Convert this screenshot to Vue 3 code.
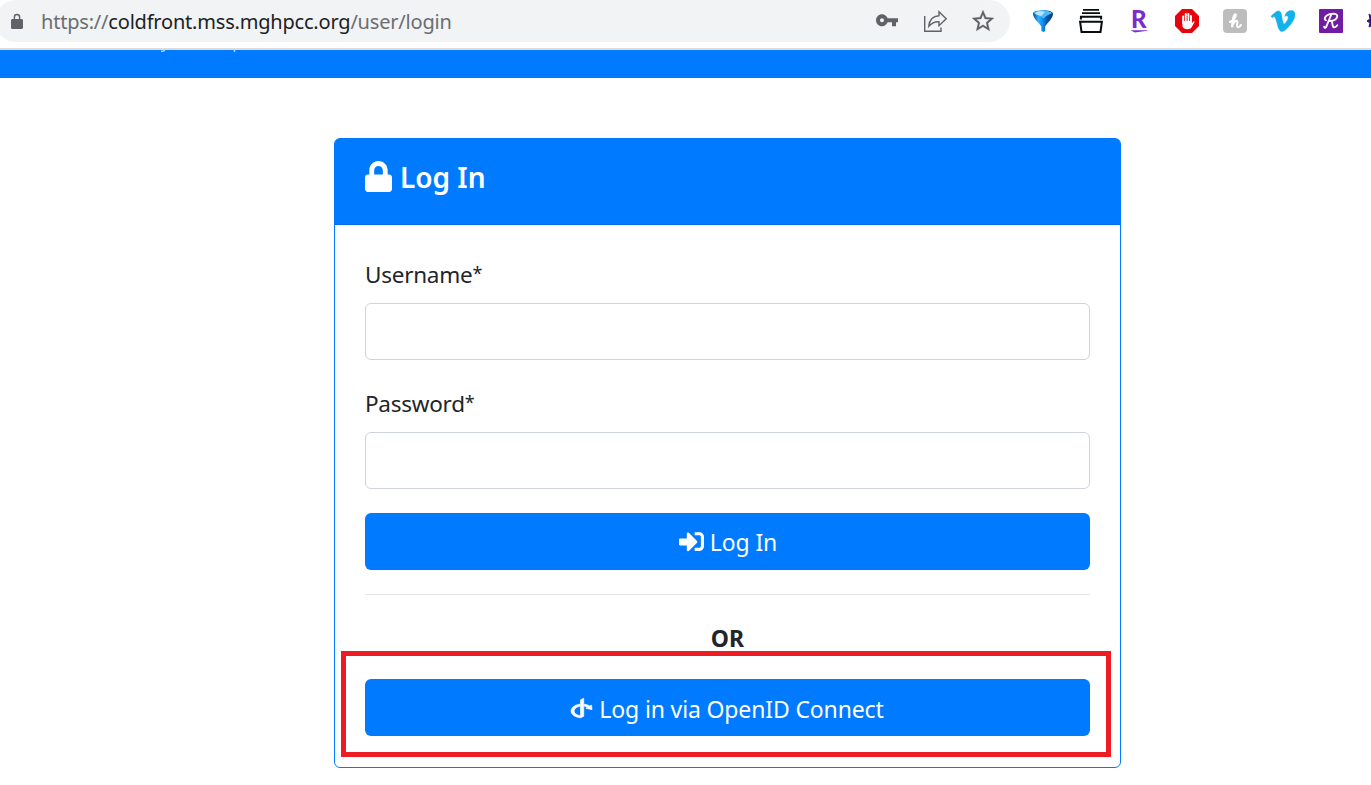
<script setup>
import { ref } from 'vue'

const username = ref('')
const password = ref('')
</script>

<template>
  <div class="page">
    <header class="toolbar">
      <div class="omnibox">
        <svg class="site-lock" viewBox="0 0 12 16"><path d="M1.6 6H2.7V4.1a3.3 3.3 0 0 1 6.6 0V6h1.1C11.4 6 12 6.6 12 7.5v7c0 .9-.6 1.5-1.6 1.5H1.6C.6 16 0 15.400 0 14.500v-7C0 6.600.6 6 1.600 6zm2.500 0h3.800V4.200a1.900 1.900 0 0 0-3.800 0z" /></svg>
        <div class="url">https://<span class="host">coldfront.mss.mghpcc.org</span>/user/login</div>
        <div class="page-actions">
          <svg viewBox="0 0 24 24"><path transform="translate(0 -.7)" fill="#5f6368" d="M12.65 10C11.83 7.670 9.610 6 7 6c-3.310 0-6 2.690-6 6s2.690 6 6 6c2.610 0 4.830-1.670 5.650-4H17v4h4v-4h2v-4H12.650zM7 14c-1.100 0-2-.9-2-2s.9-2 2-2 2 .9 2 2-.9 2-2 2z" /></svg>
          <svg viewBox="0 0 24 24" fill="none" stroke="#5f6368" stroke-width="1.4"><path d="M1.700 7V22.200H18V18.500" /><path d="M16 2.800L23.200 9.800L16 16.700V12.800C11.500 12.500 8.500 14.200 5.800 17.300C6.300 11 9.500 7.100 16 6.700Z" /></svg>
          <svg viewBox="0 0 24 24"><path transform="translate(-1.200 -1.200) scale(1.100)" fill="#5f6368" stroke="#5f6368" stroke-width=".2" d="M22 9.240l-7.190-.62L12 2 9.190 8.630 2 9.240l5.460 4.730L5.820 21 12 17.270 18.180 21l-1.630-7.030L22 9.240zM12 15.400l-3.760 2.270 1-4.280-3.320-2.880 4.380-.38L12 6.100l1.710 4.040 4.380.38-3.320 2.880 1 4.280L12 15.400z" /></svg>
        </div>
      </div>
      <div class="extensions">
        <svg viewBox="0 0 24 24">
          <defs>
            <linearGradient id="funnel" x1="0" x2="1"><stop offset="0" stop-color="#064c9b" /><stop offset=".28" stop-color="#35b2ff" /><stop offset=".5" stop-color="#0b8bea" /><stop offset=".7" stop-color="#0757a8" /><stop offset="1" stop-color="#063a7c" /></linearGradient>
          </defs>
          <path fill="url(#funnel)" d="M2 4.500C2 0 22 0 22 4.500C22 10 16 14 14.200 17.500V22L12.500 23L10.300 22V17.500C8.500 14 2 10 2 4.500Z" />
          <path d="M3 4.200C4 1.200 19 1 21 4.200C18.500 5.500 14.500 6.500 12.500 9.500C10 6.500 5.500 6.500 3 4.200Z" fill="#4fb9f7" />
          <path d="M4 4C6 2 12 1.500 14 3C12 4.500 11 6 10.500 7C8 6 5.500 6 4 4Z" fill="#c5edff" opacity=".85" />
        </svg>
        <svg viewBox="0 0 24 24" fill="none" stroke="#080c0e" stroke-width="2"><path d="M4 .8H20M3 4.200H21" stroke-width="1.700" /><path d="M1.900 10.500V7.700H22.100V10.500" /><path d="M1.100 12.700H22.900L21.500 22.900H2.500Z" /></svg>
        <svg viewBox="0 0 24 24"><text x="4" y="19" class="bold-mark">R</text><path d="M3.500 21.200H22C18 22.300 12 22.500 8 23.500Z" fill="#7d2bd0" /></svg>
        <svg viewBox="0 0 24 24">
          <path d="M7 0H17L24 7V17L17 24H7L0 17V7Z" fill="#e6050c" />
          <path d="M8.200 7.500V14M10.800 5V13M13.400 5V13M16 7V14" stroke="#fff" stroke-width="2" stroke-linecap="round" /><path d="M7.200 12H17V14L18.400 12.500C19.300 11.900 20 12.500 19.300 13.500L16.500 18.500C15.500 20.700 8.500 21 7.500 17.500Z" fill="#fff" />
          <path d="M9.500 8V12M12.100 7V12M14.700 8V12" stroke="#e6050c" stroke-width=".4" />
        </svg>
        <svg viewBox="0 0 24 24"><rect width="24" height="24" rx="4" fill="#bdbdbd" /><path d="M7 13C11 11 13.500 7.500 12.700 5.600C11.300 4.500 9.800 8.500 9 18.300C10 13.500 12 11.300 13.800 12C15.500 12.700 12.800 17.600 14.800 18.100C16.300 18.500 17.300 17.400 17.800 16" fill="none" stroke="#fff" stroke-width="2.100" stroke-linecap="round" /></svg>
        <svg viewBox="0 0 24 24"><path fill="#12b1ea" stroke="#12b1ea" stroke-width=".5" d="M23.980 6.480c-.1 2.340-1.730 5.540-4.890 9.600-3.260 4.240-6.020 6.370-8.290 6.370-1.400 0-2.590-1.300-3.560-3.890L5.300 11.440C4.580 8.850 3.810 7.560 2.980 7.560c-.18 0-.81.380-1.890 1.130L0 7.240c1.190-1.040 2.360-2.090 3.510-3.130 1.580-1.370 2.770-2.090 3.560-2.160 1.870-.18 3.020 1.100 3.450 3.830.47 2.950.79 4.780.97 5.500.54 2.450 1.130 3.670 1.780 3.670.5 0 1.260-.8 2.270-2.390 1.010-1.600 1.550-2.810 1.620-3.640.14-1.380-.4-2.070-1.620-2.070-.58 0-1.170.13-1.780.4 1.180-3.870 3.440-5.750 6.770-5.640 2.470.07 3.640 1.680 3.450 4.870z" /></svg>
        <svg viewBox="0 0 24 24"><rect width="24" height="24" rx="1" fill="#721ba3" /><path d="M12 6C11 9 8.500 14.500 7 18.300C6.500 19 5.400 18.900 5.200 17.800M7 11.300C4.500 10.500 6 6.500 10 5.300C14 4.300 19 4.300 18.200 7.800C17.500 10.700 13.500 11.900 11 12M12.300 12C14 12.500 12.700 17.800 15 18.300C16.500 18.600 17.300 17.300 18.200 16.300" fill="none" stroke="#fff" stroke-width="1.900" stroke-linecap="round" /></svg>
        <svg viewBox="0 0 24 24"><path d="M2 5L6 8V16L2 18L3 14L0 12L3 10Z" fill="#35137d" stroke="#35137d" /></svg>
      </div>
    </header>

    <nav class="navbar">
      <svg viewBox="0 0 80 3"><path d="M1 1.300H3L5 0M74.500 0V2" fill="none" stroke="#a6d0ff" stroke-width="1.600" /></svg>
    </nav>

    <main class="card">
      <h1 class="card-header">
        <svg viewBox="0 0 448 512"><path d="M400 224h-24v-72C376 68.200 307.800 0 224 0S72 68.200 72 152v72H48c-26.500 0-48 21.500-48 48v192c0 26.500 21.500 48 48 48h352c26.500 0 48-21.500 48-48V272c0-26.500-21.500-48-48-48zm-104 0H152v-72c0-39.700 32.300-72 72-72s72 32.300 72 72v72z" /></svg>
        <span class="title">Log In</span>
      </h1>
      <form class="card-body" @submit.prevent>
        <label class="user-label" for="username">Username<span class="asterisk">*</span></label>
        <input id="username" v-model="username" type="text" />
        <label class="pass-label" for="password">Password<span class="asterisk">*</span></label>
        <input id="password" v-model="password" type="password" />
        <button class="btn login" type="submit">
          <svg viewBox="0 0 512 512"><path d="M416 448h-84c-6.600 0-12-5.400-12-12v-40c0-6.600 5.400-12 12-12h84c17.700 0 32-14.300 32-32V160c0-17.700-14.300-32-32-32h-84c-6.600 0-12-5.400-12-12V76c0-6.600 5.400-12 12-12h84c53 0 96 43 96 96v192c0 53-43 96-96 96zm-47-201L201 79c-15-15-41-4.500-41 17v96H24c-13.300 0-24 10.700-24 24v96c0 13.300 10.700 24 24 24h136v96c0 21.500 26 32 41 17l168-168c9.300-9.400 9.300-24.600 0-34z" /></svg>
          <span>Log In</span>
        </button>
        <hr />
        <div class="or">OR</div>
        <button class="btn openid" type="button">
          <svg viewBox="0 0 448 512"><path stroke="#fff" stroke-width="14" d="M271.500 432l-68 32C88.500 453.700 0 392.500 0 318.200c0-71.500 82.500-131 191.700-144.300v43c-71.500 12.500-124 53-124 101.300 0 51 58.500 93.300 135.700 103v-340l68-33.200v384zM448 291l-131.300-28.500 36.800-20.700c-19.500-11.500-43.500-20-70-24.800v-43c46.200 5.500 87.700 19.500 120.300 39.300l35-19.800L448 291z" /></svg>
          <span>Log in via OpenID Connect</span>
        </button>
      </form>
      <div class="highlight"></div>
    </main>
  </div>
</template>

<style>
html, body { overflow: hidden; background: #fff; }
</style>

<style scoped>
* { box-sizing: border-box; }
.page { width: 1371px; height: 785px; overflow: hidden; background: #fff; font-family: "Noto Sans", sans-serif; color: #212529; }
svg { display: block; flex: none; overflow: visible; }
.toolbar { display: flex; height: 50px; border-bottom: 2px solid #dadcdf; }
.omnibox { display: flex; align-items: center; flex: none; width: 1015px; height: 42px; margin-left: -5px; padding-left: 16px; padding-right: 15px; background: #f1f3f4; border-radius: 21px; }
.site-lock { width: 12px; height: 16px; fill: #5f6368; }
.url { margin-left: 18px; padding-top: 2px; white-space: nowrap; font-size: 20px; letter-spacing: -.2px; line-height: 42px; color: #6a6e72; }
.host { color: #202124; }
.page-actions { display: flex; gap: 24px; margin-left: auto; }
.page-actions svg, .extensions svg { width: 24px; height: 24px; }
.extensions { display: flex; flex: none; gap: 24px; padding: 9px 0 0 21px; }
.bold-mark { font: 900 24px Lato, sans-serif; fill: #7d2bd0; }
.navbar { height: 28px; padding-left: 160px; background: #007bff; }
.navbar svg { width: 80px; height: 3px; }
.card { position: relative; width: 787px; height: 630px; margin: 60px 0 0 334px; border: 1px solid #007bff; border-radius: 6px; }
.card-header { display: flex; align-items: flex-start; height: 86px; margin: 0; padding: 21.500px 30px 0; background: #007bff; border-bottom: 1px solid #006ee5; border-radius: 4px 4px 0 0; color: #fff; }
.card-header svg { width: 27px; height: 31px; fill: #fff; }
.title { margin-top: -.5px; margin-left: 8px; font-size: 28px; font-weight: 600; line-height: 34px; }
.card-body { display: flex; flex-direction: column; padding: 32px 30px 0; }
label { height: 36px; margin-bottom: 10px; font-size: 22.500px; letter-spacing: -.25px; line-height: 36px; }
.asterisk { font-size: 18px; line-height: 1; vertical-align: 3px; }
.pass-label { margin-top: 26px; margin-bottom: 10px; }
input { width: 100%; height: 57px; padding: 9px 18px; border: 1px solid #ced4da; border-radius: 6px; font: inherit; font-size: 24px; outline: 0; }
.btn { display: flex; align-items: center; justify-content: center; height: 57px; padding: 0; border: 0; border-radius: 6px; background: #007bff; color: #fff; font-family: inherit; font-size: 23px; letter-spacing: -.14px; line-height: 36px; }
.btn svg { fill: #fff; }
.btn span { white-space: nowrap; }
.login { margin-top: 24px; padding-left: 1px; }
.login svg { width: 25px; height: 25px; margin-right: 6px; }
.openid svg { width: 21px; height: 24px; margin-right: 7px; }
.openid span { padding-top: 2px; }
hr { width: 100%; height: 1px; margin: 24px 0; border: 0; background: #e5e5e5; }
.or { height: 36px; margin-bottom: 24px; text-align: center; font-size: 23px; font-weight: 700; line-height: 39px; }
.highlight { position: absolute; left: 6px; top: 512px; width: 770px; height: 106px; border: 5px solid #ed1c24; }
</style>
